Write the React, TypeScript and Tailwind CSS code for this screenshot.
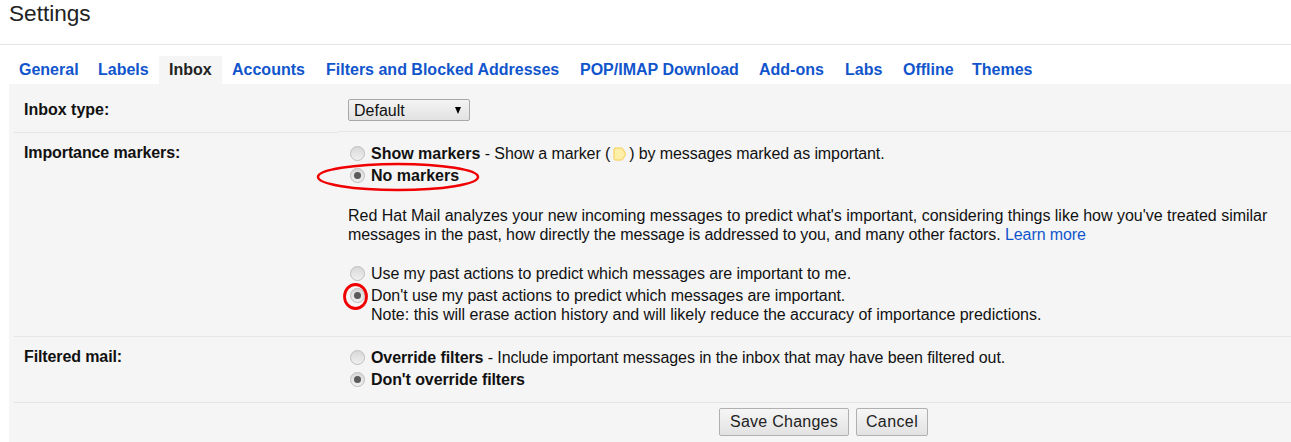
import React from "react";

const tabs = [
  { name: "General", width: "w-[79px]" },
  { name: "Labels", width: "w-[71px]" },
  { name: "Inbox", width: "w-[63px]" },
  { name: "Accounts", width: "w-[94px]" },
  { name: "Filters and Blocked Addresses", width: "w-[254px]" },
  { name: "POP/IMAP Download", width: "w-[179px]" },
  { name: "Add-ons", width: "w-[86px]" },
  { name: "Labs", width: "w-[58px]" },
  { name: "Offline", width: "w-[69px]" },
  { name: "Themes", width: "w-[81px]" },
];

const Radio: React.FC<{ checked?: boolean }> = ({ checked }) => (
  <span className="ml-[2px] mr-[6px] inline-flex h-[15px] w-[15px] shrink-0 items-center justify-center rounded-full border border-[#bdbdbd] bg-gradient-to-b from-[#d8d8d8] to-[#f0f0f0]">
    {checked && <span className="h-[7px] w-[7px] rounded-full bg-[#5a5a5a]" />}
  </span>
);

const Option: React.FC<{ checked?: boolean; className?: string; children: React.ReactNode }> = ({
  checked,
  className,
  children,
}) => (
  <div className={`flex h-[22px] items-center whitespace-nowrap ${className ?? ""}`}>
    <Radio checked={checked} />
    <span>{children}</span>
  </div>
);

const Label: React.FC<{ children: React.ReactNode }> = ({ children }) => (
  <div className="w-[324px] shrink-0 pl-[10px] pt-[10px] font-bold tracking-[-0.11px]">{children}</div>
);

const buttonClass =
  "h-[28px] rounded-[2px] border border-[#b0b0b0] bg-gradient-to-b from-[#f6f6f6] to-[#e2e2e2] pb-[2px] text-[#222]";

export default function App() {
  return (
    <div className="h-[442px] w-[1291px] overflow-hidden bg-white font-['Liberation_Sans',sans-serif] text-[16px] leading-[19px] text-[#111]">
      <div className="h-[45px] border-b border-[#e5e5e5] pl-[9px] text-[22.6px] leading-[28px] text-[#222]">
        Settings
      </div>

      <div className="flex h-[39px] items-end pl-[9px] font-bold">
        {tabs.map((tab) => (
          <div
            key={tab.name}
            className={`flex h-[28px] items-center pb-[2px] pl-[10px] ${tab.width} ${
              tab.name === "Inbox" ? "bg-[#f5f5f5] text-[#222]" : "text-[#1155cc]"
            }`}
          >
            {tab.name}
          </div>
        ))}
      </div>

      <div className="relative ml-[9px] h-[358px] bg-[#f5f5f5]">
        {/* inbox type */}
        <div className="ml-[5px] flex items-start">
          <div className="h-[49px] w-[324px] shrink-0 border-b border-[#e5e5e5] pl-[10px] pt-[16px] font-bold">
            Inbox type:
          </div>
          <div className="h-[48px] flex-1 border-b border-[#e5e5e5] pl-[10px] pt-[15px]">
            <div className="flex h-[22px] w-[122px] items-center justify-between rounded-[2px] border border-[#a8a8a8] bg-gradient-to-b from-[#f4f4f4] to-[#e2e2e2] pl-[5px] pr-[8px]">
              <span>Default</span>
              <span className="h-0 w-0 border-x-[3.5px] border-t-[7px] border-x-transparent border-t-black" />
            </div>
          </div>
        </div>

        {/* importance markers */}
        <div className="ml-[5px] flex h-[204px] border-b border-[#e5e5e5]">
          <Label>Importance markers:</Label>
          <div className="pl-[10px] pt-[9px]">
            <Option>
              <b>Show markers</b>
              <span className="tracking-[-0.1px]"> - Show a marker (</span>
              <svg className="mx-[3px] inline-block align-[-2px]" width="13" height="14" viewBox="0 0 13 14">
                <path
                  d="M3 1h4.500c1 0 1.600.4 2.200 1.100l2.300 3.400c.6.9.6 2 0 2.900L9.700 11.900C9.100 12.600 8.500 13 7.500 13H3c-1.200 0-2-.8-2-2V3c0-1.200.8-2 2-2z"
                  fill="#fdeea8"
                  stroke="#f8d978"
                  strokeWidth="1.500"
                />
              </svg>
              <span className="tracking-[-0.1px]">) by messages marked as important.</span>
            </Option>
            <Option checked>
              <b>No markers</b>
            </Option>
            <div className="mt-[20px] whitespace-nowrap">
              <div className="tracking-[-0.015px]">
                Red Hat Mail analyzes your new incoming messages to predict what's important, considering things like how you've treated similar
              </div>
              <div className="tracking-[-0.09px]">
                messages in the past, how directly the message is addressed to you, and many other factors.{" "}
                <span className="text-[#1155cc]">Learn more</span>
              </div>
            </div>
            <div className="mt-[18px] tracking-[-0.07px]">
              <Option>Use my past actions to predict which messages are important to me.</Option>
              <Option checked>Don't use my past actions to predict which messages are important.</Option>
              <div className="mt-[1px] whitespace-nowrap pl-[23px] leading-[16px] tracking-[-0.01px]">
                Note: this will erase action history and will likely reduce the accuracy of importance predictions.
              </div>
            </div>
          </div>
        </div>

        {/* filtered mail */}
        <div className="ml-[5px] flex h-[66px] border-b border-[#e5e5e5]">
          <Label>Filtered mail:</Label>
          <div className="pl-[10px] pt-[9px]">
            <Option>
              <b className="tracking-[-0.09px]">Override filters</b>
              <span className="tracking-[-0.1px]"> - Include important messages in the inbox that may have been filtered out.</span>
            </Option>
            <Option checked>
              <b className="tracking-[-0.09px]">Don't override filters</b>
            </Option>
          </div>
        </div>

        <div className="flex gap-[7px] pl-[710px] pt-[5px]">
          <button className={`w-[130px] tracking-[0.25px] ${buttonClass}`}>Save Changes</button>
          <button className={`w-[72px] tracking-[0.4px] ${buttonClass}`}>Cancel</button>
        </div>

        {/* red annotations */}
        <svg className="pointer-events-none absolute left-[305px] top-[78px]" width="168" height="32" viewBox="0 0 168 32">
          <ellipse cx="84" cy="15" rx="80" ry="13" fill="none" stroke="#f00000" strokeWidth="2.500" />
        </svg>
        <svg className="pointer-events-none absolute left-[334px] top-[199px]" width="28" height="28" viewBox="0 0 28 28">
          <ellipse cx="12.500" cy="13.500" rx="11" ry="12" fill="none" stroke="#f00000" strokeWidth="2.800" />
        </svg>
      </div>
    </div>
  );
}
